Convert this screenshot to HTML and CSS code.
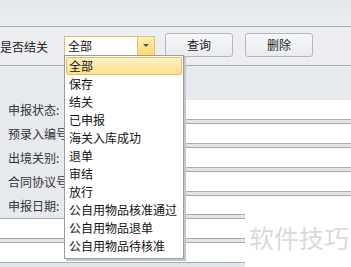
FILE: index.html
```html
<!DOCTYPE html>
<html lang="zh-CN">
<head>
  <meta charset="utf-8">
  <title>报关单查询</title>
  <link rel="stylesheet" href="styles.css">
</head>
<body>
  <div class="header"></div>

  <div class="toolbar">
    <span class="tool-label">是否结关</span>
    <div class="combo">
      <span class="combo-text">全部</span>
      <span class="combo-btn"><i class="arrow"></i></span>
    </div>
    <button class="btn">查询</button>
    <button class="btn btn-del">删除</button>
  </div>

  <div class="main">
    <div class="labels">
      <div class="label">申报状态:</div>
      <div class="label">预录入编号:</div>
      <div class="label">出境关别:</div>
      <div class="label">合同协议号:</div>
      <div class="label">申报日期:</div>
    </div>
    <div class="fields">
      <div class="strip"></div>
      <div class="row"></div>
      <div class="row"></div>
      <div class="row"></div>
      <div class="row"></div>
      <div class="row row-short"></div>
    </div>
  </div>

  <div class="lower">
    <div class="row"></div>
    <div class="row row-last"></div>
  </div>

  <div class="watermark">软件技巧</div>

  <ul class="dropdown">
    <li class="item active">全部</li>
    <li class="item">保存</li>
    <li class="item">结关</li>
    <li class="item">已申报</li>
    <li class="item">海关入库成功</li>
    <li class="item">退单</li>
    <li class="item">审结</li>
    <li class="item">放行</li>
    <li class="item">公自用物品核准通过</li>
    <li class="item">公自用物品退单</li>
    <li class="item">公自用物品待核准</li>
  </ul>
</body>
</html>
```

FILE: styles.css
```css
body {
  margin: 0;
  height: 267px;
  background: #fff;
  font-family: "Noto Sans CJK SC", "Noto Sans", sans-serif;
  font-size: 12px;
  color: #222;
  position: relative;
  overflow: hidden;
}

.header {
  height: 26px;
  background: linear-gradient(#e3e6ea, #eceef1);
  border-bottom: 1px solid #a7aaaf;
}

.toolbar {
  height: 38px;
  display: flex; align-items: center;
  background: #eceef1;
  border-bottom: 1px solid #a7aaaf;
}
.tool-label {
  width: 48px;
  line-height: 20px;
  color: #222;
  margin-top: 1px;
}
.combo {
  display: flex;
  width: 89px; height: 18px;
  margin-left: 16px;
  margin-top: -1px;
  border: 1px solid #e2c068;
  background: #fff;
}
.combo-text {
  flex: 1;
  padding-left: 3px;
  line-height: 18px;
  color: #111;
}
.combo-btn {
  width: 16px;
  display: flex; align-items: center; justify-content: center;
  background: linear-gradient(#fff0b5, #fcd870);
  border-left: 1px solid #e2c068;
}
.combo-btn .arrow {
  width: 0; height: 0;
  border-left: 3px solid transparent;
  border-right: 3px solid transparent;
  border-top: 3px solid #555;
}

.btn {
  width: 68px; height: 24px;
  margin-left: 10px;
  margin-top: -3px;
  padding: 0;
  font-family: inherit; font-size: 12px;
  color: #222;
  background: linear-gradient(#f6f7f9, #e9ebee);
  border: 1px solid #b3b6bb;
  border-radius: 3px;
}
.btn-del {margin-left: 12px;}

.main {display: flex;}
.labels {
  width: 182px; height: 120px;
  padding-top: 32px;
  background: #e6e9ee;
  border-bottom: 1px solid #a7aaaf;
}
.label {
  padding-left: 8px;
  line-height: 24px;
  color: #333;
}
.fields {flex: 1;}
.strip {
  height: 34px;
  background: #e6e9ee;
}

/* white field row with a grey double rule under it */
.row {
  height: 19px;
  margin-bottom: 5px;
  background: #fff;
  box-shadow: 0 1px 0 #a7aaaf, 0 4px 0 #e1e4e9, 0 5px 0 #a7aaaf;
}
.row-short {
  height: 18px;
  width: 63px;
}

.lower {width: 245px;}
.row-last {
  margin-bottom: 0;
  box-shadow: 0 1px 0 #a7aaaf, 0 5px 0 #e3e6ea;
}

.watermark {
  position: absolute;
  left: 249px; top: 221px;
  font-size: 25px;
  line-height: 32px;
  color: #dadada;
}

.dropdown {
  position: absolute;
  left: 64px; top: 55px;
  width: 116px; height: 200px;
  margin: 0; padding: 1px;
  list-style: none;
  background: #fff;
  border: 1px solid #9c9c9c;
  box-shadow: 2px 2px 0 #c4c6ca;
}
.item {
  height: 18px;
  line-height: 18px;
  padding-left: 3px;
  color: #111;
  white-space: nowrap;
}
.item.active {
  height: 16px;
  line-height: 16px;
  padding-left: 2px;
  border: 1px solid #e6bf5c;
  border-radius: 2px;
  background: linear-gradient(#fff1c4, #fde08c);
}
```
